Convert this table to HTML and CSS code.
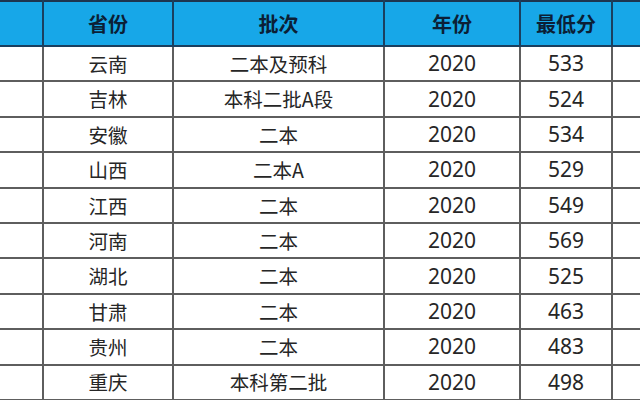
FILE: index.html
```html
<!DOCTYPE html>
<html lang="zh">
<head>
<meta charset="utf-8">
<link rel="stylesheet" href="styles.css">
</head>
<body>
<table class="score-table">
  <colgroup>
    <col class="c0"><col class="c1"><col class="c2"><col class="c3"><col class="c4"><col class="c5">
  </colgroup>
  <thead>
    <tr><th></th><th>省份</th><th>批次</th><th>年份</th><th>最低分</th><th></th></tr>
  </thead>
  <tbody>
    <tr><td></td><td>云南</td><td>二本及预科</td><td class="num">2020</td><td class="num">533</td><td></td></tr>
    <tr><td></td><td>吉林</td><td>本科二批A段</td><td class="num">2020</td><td class="num">524</td><td></td></tr>
    <tr><td></td><td>安徽</td><td>二本</td><td class="num">2020</td><td class="num">534</td><td></td></tr>
    <tr><td></td><td>山西</td><td>二本A</td><td class="num">2020</td><td class="num">529</td><td></td></tr>
    <tr><td></td><td>江西</td><td>二本</td><td class="num">2020</td><td class="num">549</td><td></td></tr>
    <tr><td></td><td>河南</td><td>二本</td><td class="num">2020</td><td class="num">569</td><td></td></tr>
    <tr><td></td><td>湖北</td><td>二本</td><td class="num">2020</td><td class="num">525</td><td></td></tr>
    <tr><td></td><td>甘肃</td><td>二本</td><td class="num">2020</td><td class="num">463</td><td></td></tr>
    <tr><td></td><td>贵州</td><td>二本</td><td class="num">2020</td><td class="num">483</td><td></td></tr>
    <tr><td></td><td>重庆</td><td>本科第二批</td><td class="num">2020</td><td class="num">498</td><td></td></tr>
  </tbody>
</table>
</body>
</html>
```
FILE: styles.css
```css
html, body {
  margin: 0;
  padding: 0;
  background: #ffffff;
  width: 640px;
  height: 400px;
  overflow: hidden;
}

.score-table {
  width: 640px;
  table-layout: fixed;
  border-collapse: collapse;
  font-family: "Noto Sans CJK SC", "Noto Sans", sans-serif;
  color: #262626;
}

.c0 { width: 43px; }
.c1 { width: 130px; }
.c2 { width: 211px; }
.c3 { width: 136px; }
.c4 { width: 92px; }
.c5 { width: 28px; }

.score-table th,
.score-table td {
  border: 2px solid #5e5e5e;
  text-align: center;
  padding: 0;
}

.score-table tr > :first-child { border-left: none; }
.score-table tr > :last-child { border-right: none; }

.score-table thead th {
  height: 43px;
  background: #17a7e8;
  color: #0b1f36;
  font-size: 20px;
  font-weight: 700;
  border-top: 2px solid #1d3550;
  border-bottom: 2px solid #1a3f5f;
  border-left-color: #1a3f5f;
  border-right-color: #1a3f5f;
}

.score-table tbody td {
  height: 33.4px;
  font-size: 19.5px;
  line-height: 1;
}

.score-table td.num {
  font-family: "Noto Sans", "Open Sans", sans-serif;
  font-size: 21px;
}
```
